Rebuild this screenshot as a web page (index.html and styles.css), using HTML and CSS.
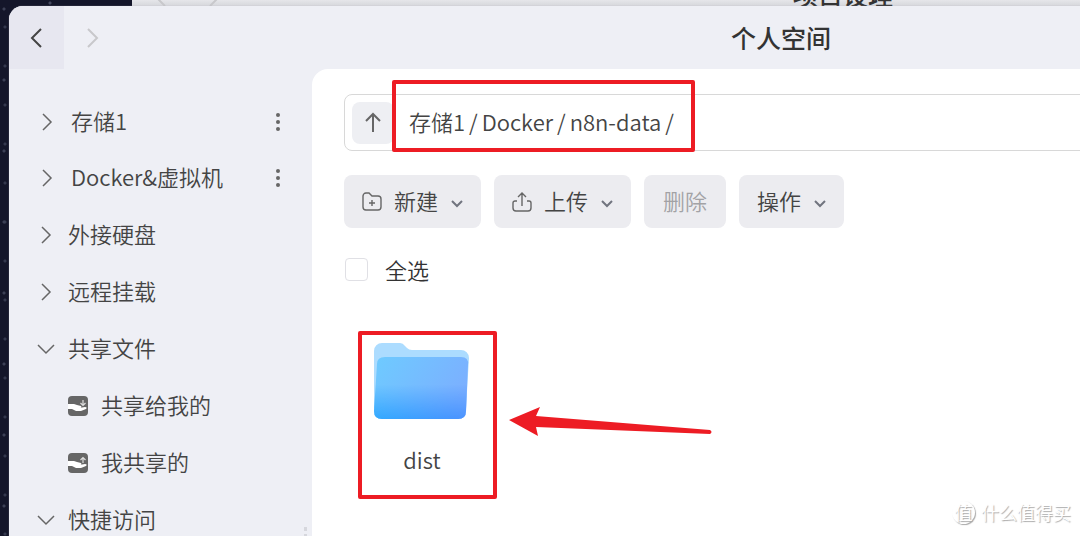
FILE: index.html
```html
<!DOCTYPE html>
<html lang="zh-CN">
<head>
    <meta charset="UTF-8">
    <meta name="viewport" content="width=device-width, initial-scale=1.0">
    <title>个人空间</title>
    <link rel="stylesheet" href="styles.css">
</head>
<body>
    <div class="desktop">
        <section class="window window-back">
            <header class="titlebar">
                <div class="nav">
                    <button class="nav-button" aria-label="后退"><svg width="24" height="24" viewBox="0 0 24 24"><path d="M17 3l-10 10 10 10"/></svg></button>
                    <button class="nav-button" aria-label="前进"><svg width="24" height="24" viewBox="0 0 24 24"><path d="M7 3l10 10-10 10"/></svg></button>
                </div>
                <h2 class="title">项目设理</h2>
            </header>
        </section>

        <section class="window window-front">
            <header class="titlebar">
                <div class="nav">
                    <button class="nav-button active" aria-label="后退"><svg width="24" height="24" viewBox="0 0 24 24"><path d="M16 3l-9 9 9 9"/></svg></button>
                    <button class="nav-button" aria-label="前进" disabled><svg width="24" height="24" viewBox="0 0 24 24"><path d="M8 3l9 9-9 9"/></svg></button>
                </div>
                <h1 class="title">个人空间</h1>
            </header>

            <div class="window-body">
                <nav class="sidebar">
                    <div class="item storage">
                        <svg class="chevron" width="18" height="18" viewBox="0 0 18 18"><path d="M6 1l8 8-8 8"/></svg>
                        <a href="#">存储1</a>
                        <button class="more" aria-label="更多"><svg width="6" height="20" viewBox="0 0 6 20"><circle cx="3" cy="3" r="2"/><circle cx="3" cy="10" r="2"/><circle cx="3" cy="17" r="2"/></svg></button>
                    </div>
                    <div class="item storage">
                        <svg class="chevron" width="18" height="18" viewBox="0 0 18 18"><path d="M6 1l8 8-8 8"/></svg>
                        <a href="#">Docker&amp;虚拟机</a>
                        <button class="more" aria-label="更多"><svg width="6" height="20" viewBox="0 0 6 20"><circle cx="3" cy="3" r="2"/><circle cx="3" cy="10" r="2"/><circle cx="3" cy="17" r="2"/></svg></button>
                    </div>
                    <div class="item">
                        <svg class="chevron" width="18" height="18" viewBox="0 0 18 18"><path d="M5 1l8 8-8 8"/></svg>
                        <a href="#">外接硬盘</a>
                    </div>
                    <div class="item">
                        <svg class="chevron" width="18" height="18" viewBox="0 0 18 18"><path d="M5 1l8 8-8 8"/></svg>
                        <a href="#">远程挂载</a>
                    </div>
                    <div class="item">
                        <svg class="chevron" width="18" height="18" viewBox="0 0 18 18"><path d="M1 5l8 8 8-8"/></svg>
                        <a href="#">共享文件</a>
                    </div>
                    <div class="item sub">
                        <svg width="20" height="20" viewBox="0 0 20 20"><rect width="20" height="20" rx="4" fill="#666"/><path d="M0 8h6l3 1 4 1c1 1 0 2-2 2l6-1c2 0 2 1 1 2l-5 2H8l-4-2H0z" fill="#fff"/><path d="M15 4v5M12.500 7l2.500 2.500L17.500 7" fill="none" stroke="#ddd" stroke-width="1.200"/></svg>
                        <a href="#">共享给我的</a>
                    </div>
                    <div class="item sub">
                        <svg width="20" height="20" viewBox="0 0 20 20"><rect width="20" height="20" rx="4" fill="#666"/><path d="M0 8h6l3 1 4 1c1 1 0 2-2 2l6-1c2 0 2 1 1 2l-5 2H8l-4-2H0z" fill="#fff"/><path d="M15 10V5M12.500 7l2.500-2.500L17.500 7" fill="none" stroke="#ddd" stroke-width="1.200"/></svg>
                        <a href="#">我共享的</a>
                    </div>
                    <div class="item">
                        <svg class="chevron" width="18" height="18" viewBox="0 0 18 18"><path d="M1 5l8 8 8-8"/></svg>
                        <a href="#">快捷访问</a>
                    </div>
                    <span class="resize-grip"></span>
                </nav>

                <main class="content">
                    <div class="path-bar">
                        <button class="up-button" aria-label="上一级"><svg width="22" height="22" viewBox="0 0 22 22"><path d="M11 20V2M4 9l7-7 7 7"/></svg></button>
                        <div class="crumbs marked">
                            <a href="#">存储1</a><span>/</span><a href="#">Docker</a><span>/</span><a href="#">n8n-data</a><span>/</span>
                        </div>
                    </div>

                    <div class="toolbar">
                        <button class="tool">
                            <svg class="tool-icon" width="20" height="20" viewBox="0 0 20 20"><path d="M1 4a3 3 0 0 1 3-3h3l3 3h6a3 3 0 0 1 3 3v8a3 3 0 0 1-3 3H4a3 3 0 0 1-3-3zM10 8v6M7 11h6"/></svg>
                            <span>新建</span>
                            <svg class="caret" width="12" height="8" viewBox="0 0 12 8"><path d="M1 1l5 5 5-5"/></svg>
                        </button>
                        <button class="tool">
                            <svg class="tool-icon" width="20" height="20" viewBox="0 0 20 20"><path d="M10 14V1M6 5l4-4 4 4M5 9H3a2 2 0 0 0-2 2v5a3 3 0 0 0 3 3h12a3 3 0 0 0 3-3v-5a2 2 0 0 0-2-2h-2"/></svg>
                            <span>上传</span>
                            <svg class="caret" width="12" height="8" viewBox="0 0 12 8"><path d="M1 1l5 5 5-5"/></svg>
                        </button>
                        <button class="tool" disabled><span>删除</span></button>
                        <button class="tool">
                            <span>操作</span>
                            <svg class="caret" width="12" height="8" viewBox="0 0 12 8"><path d="M1 1l5 5 5-5"/></svg>
                        </button>
                    </div>

                    <label class="select-all"><input type="checkbox">全选</label>

                    <div class="files">
                        <a class="file marked" href="#">
                            <svg width="96" height="78" viewBox="0 0 96 78">
                                <defs>
                                    <linearGradient id="front" x1="0" y1="0" x2="1" y2="0.400">
                                        <stop offset="0" stop-color="#6ecbff"/>
                                        <stop offset="1" stop-color="#7bb0ff"/>
                                    </linearGradient>
                                    <linearGradient id="shade" x1="0" y1="0" x2="1" y2="0">
                                        <stop offset="0" stop-color="#30a8ff"/>
                                        <stop offset="1" stop-color="#4a91ff"/>
                                    </linearGradient>
                                    <linearGradient id="fade" x1="0" y1="0" x2="0" y2="1">
                                        <stop offset="0.550" stop-color="#000"/>
                                        <stop offset="1" stop-color="#fff"/>
                                    </linearGradient>
                                    <mask id="lower"><rect width="96" height="78" fill="url(#fade)"/></mask>
                                </defs>
                                <path d="M0 9a8 8 0 0 1 8-8h18q3 0 5 3l2 2q2 2 5 2h49a8 8 0 0 1 8 8l-3 50H0z" fill="#acdcff"/>
                                <path d="M3 22q0-7 8-7h76q8 0 7 8l-2 46q0 8-8 8H8q-8 0-8-8z" fill="url(#front)"/>
                                <path d="M3 22q0-7 8-7h76q8 0 7 8l-2 46q0 8-8 8H8q-8 0-8-8z" fill="url(#shade)" mask="url(#lower)"/>
                            </svg>
                            <span>dist</span>
                        </a>
                        <svg class="arrow" width="204" height="32" viewBox="0 0 204 32"><path d="M0 14L31 1l-4 9 174 14q3 2 0 4L27 21l2 9z"/></svg>
                    </div>
                </main>
            </div>
        </section>

        <div class="watermark"><span class="watermark-logo">值</span><span>什么值得买</span></div>
    </div>
</body>
</html>
```
FILE: styles.css
```css
* {
    box-sizing: border-box;
}
body {
    margin: 0;
    font-family: "Noto Sans CJK SC", sans-serif;
    font-size: 22px;
    font-weight: 350;
    line-height: 32px;
    color: #444;
}
a {
    color: inherit;
    text-decoration: none;
}
button {
    border: none;
    background: none;
    padding: 0;
    font: inherit;
    color: inherit;
}
svg {
    display: block;
    flex-shrink: 0;
}
.desktop {
    position: relative;
    height: 100vh;
    overflow: hidden;
    background-color: #14162a;
    background-image:
        radial-gradient(circle at 4px 9px, #3c4056 1px, transparent 2px),
        radial-gradient(circle at 50px 3px, #44485e 1px, transparent 2px),
        radial-gradient(circle at 5px 27px, #34384e 1px, transparent 2px),
        radial-gradient(circle at 53px 28px, #34384e 1px, transparent 2px);
    background-size: 67px 71px, 97px 83px, 59px 39px, 73px 61px;
}

/* windows */
.window {
    position: absolute;
    display: flex;
    flex-direction: column;
    background: #eeeff5;
}
.window-back {
    top: -37px;
    bottom: 40px;
    left: 132px;
    right: -474px;
    background: linear-gradient(#e8e8ec 36px, #d3d4d9 44px);
}
.window-front {
    top: 6px;
    bottom: -80px;
    left: 9px;
    right: -473px;
    border-radius: 14px 0 0 0;
    overflow: hidden;
    box-shadow: 0 0 1px #aaacb8;
}
.titlebar {
    display: grid;
    grid-template-columns: 1fr auto 1fr;
    align-items: center;
    height: 63px;
    flex-shrink: 0;
}
.nav {
    display: flex;
    height: 100%;
}
.nav-button {
    display: flex;
    align-items: center;
    justify-content: center;
    width: 55px;
    color: #444;
}
.nav-button.active {
    background: #e7e7f0;
}
.nav-button:disabled,
.window-back .nav-button {
    color: #c8c8cb;
}
.nav-button path {
    fill: none;
    stroke: currentColor;
    stroke-width: 2;
}
.title {
    margin: 0;
    padding-bottom: 2px;
    font-size: 25px;
    font-weight: 500;
    color: #333;
}
.window-body {
    display: flex;
    flex: 1;
}

/* sidebar */
.sidebar {
    position: relative;
    width: 303px;
    flex-shrink: 0;
    padding: 25px 31px 0 28px;
}
.item {
    display: flex;
    align-items: center;
    gap: 13px;
    height: 57px;
}
.item.storage {
    gap: 16px;
    height: 56px;
}
.item.sub {
    padding-left: 31px;
}
.item a,
.tool span {
    padding-bottom: 4px;
}
.chevron path {
    fill: none;
    stroke: #666;
    stroke-width: 1.5;
}
.more {
    margin-left: auto;
}
.more svg {
    fill: #666;
}
.resize-grip {
    position: absolute;
    right: 5px;
    top: 458px;
    height: 24px;
    border-right: 3px dotted #d6d7dd;
}

/* content */
.content {
    flex: 1;
    padding: 25px 0 0 32px;
    background: #fff;
    border-radius: 16px 0 0 0;
}
.path-bar {
    display: flex;
    align-items: center;
    height: 57px;
    padding-left: 7px;
    border: 1px solid #d8d8d8;
    border-radius: 8px;
}
.up-button {
    display: flex;
    align-items: center;
    justify-content: center;
    width: 42px;
    height: 42px;
    border-radius: 8px;
    background: #eeeff3;
}
.up-button path {
    fill: none;
    stroke: #666;
    stroke-width: 2;
}
.marked {
    position: relative;
}
.marked::after {
    content: "";
    position: absolute;
    border: 4px solid #ed1c24;
    border-radius: 2px;
}
.crumbs {
    display: flex;
    gap: 4px;
    padding: 0 21px 4px 15px;
}
.crumbs::after {
    inset: -25px 0 -11px -2px;
}
.toolbar {
    display: flex;
    gap: 13px;
    margin-top: 24px;
}
.tool {
    display: flex;
    align-items: center;
    height: 53px;
    padding: 0 18px;
    border-radius: 8px;
    background: #ececf0;
}
.tool:disabled {
    padding: 0 19px;
    color: #a2a2a5;
}
.tool-icon {
    margin-right: 12px;
}
.tool-icon path {
    fill: none;
    stroke: #666;
    stroke-width: 1.4;
}
.caret {
    margin: 4px 0 0 13px;
}
.caret path {
    fill: none;
    stroke: #71747f;
    stroke-width: 2;
}
.select-all {
    display: flex;
    align-items: center;
    gap: 17px;
    width: max-content;
    margin-top: 25px;
    color: #333;
}
.select-all input {
    appearance: none;
    width: 23px;
    height: 23px;
    margin: 0 0 0 1px;
    border: 1px solid #e0e0e5;
    border-radius: 4px;
    background: #fff;
}
.files {
    display: flex;
    align-items: center;
    gap: 12px;
    margin: 46px 0 0 14px;
}
.file {
    display: flex;
    flex-direction: column;
    align-items: center;
    width: 139px;
    height: 168px;
    padding: 11px 11px 0 0;
    gap: 23px;
}
.file::after {
    inset: 0;
}
.arrow {
    fill: #ed1c24;
    margin-top: 14px;
}

.watermark {
    position: absolute;
    right: 9px;
    bottom: 8px;
    display: flex;
    align-items: center;
    gap: 6px;
    font-size: 18px;
    color: #fff;
    text-shadow: 1px 1px 1px #aaa;
}
.watermark-logo {
    width: 23px;
    height: 23px;
    border-radius: 50%;
    line-height: 23px;
    text-align: center;
    box-shadow: 1px 1px 1px #aaa;
}
```
